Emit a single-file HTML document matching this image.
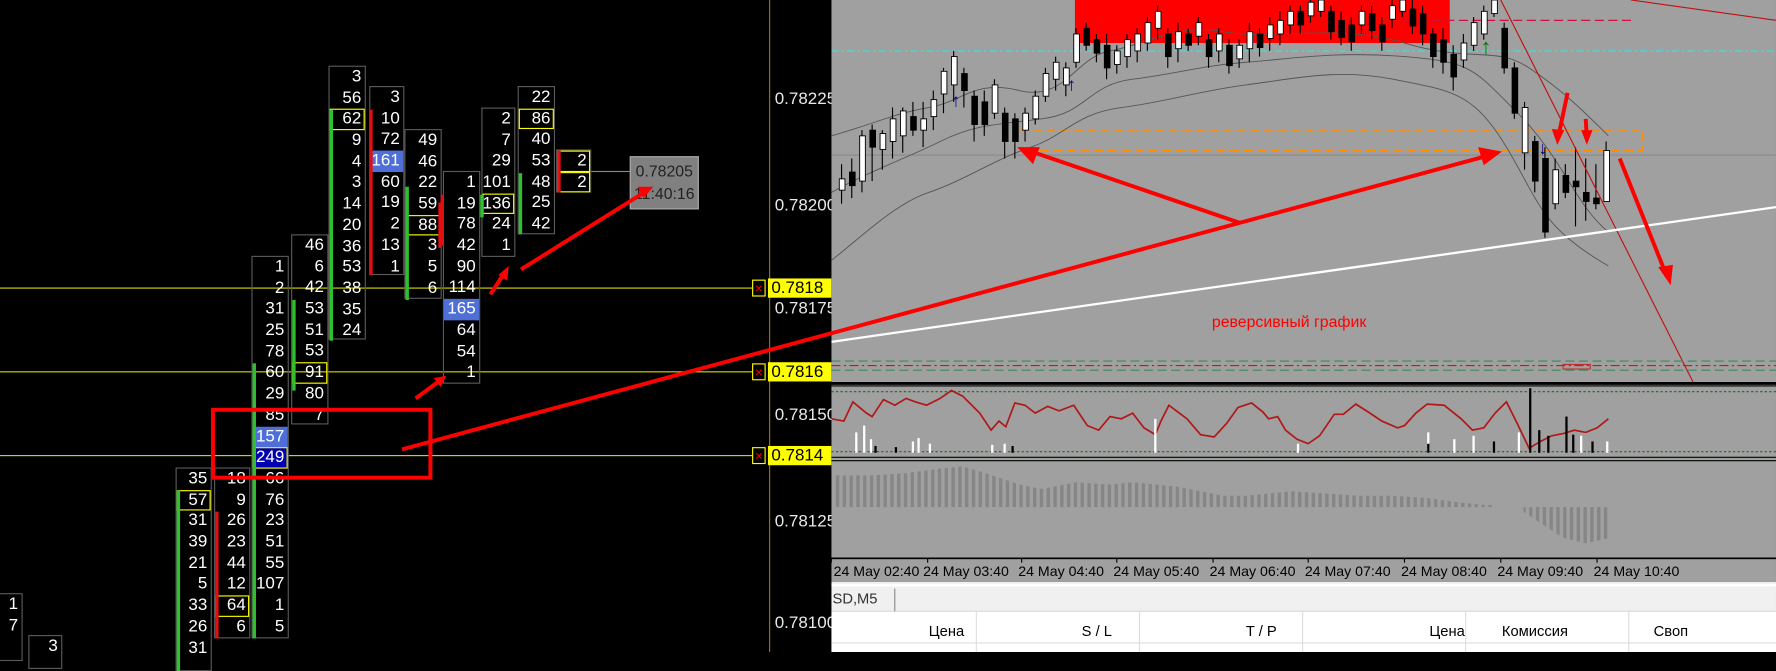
<!DOCTYPE html>
<html><head><meta charset="utf-8">
<style>
html,body{margin:0;padding:0;background:#000;overflow:hidden;width:1776px;height:652px}
#w{position:absolute;left:0;top:0;width:1568px;height:576px;transform:scale(1.13265,1.13194);transform-origin:0 0;background:#000;font-family:"Liberation Sans Narrow","Liberation Sans",sans-serif}
.c{position:absolute;border:1px solid #5a5a5a;box-sizing:border-box}
.c div{height:18.7px;line-height:18.7px;text-align:right;padding-right:3px;color:#fff;font-size:15px;box-sizing:border-box}
.c .y{outline:1px solid #ff0;outline-offset:-1px}
.c .b{background:#4f6fd8}
.c .d{background:#0000b0;outline:1px solid #ff0;outline-offset:-1px}
.bar{position:absolute;width:3px}
.g{background:#2fc02f}.r{background:#e01010}
.ax{position:absolute;left:684px;color:#e8e8e8;font-size:15px;font-family:"Liberation Sans Narrow","Liberation Sans",sans-serif}
.yl{position:absolute;left:678px;width:56px;height:17px;background:#ff0;color:#000;font-size:15px;line-height:17px;padding-left:3px;box-sizing:border-box}
.xb{position:absolute;left:664px;width:12px;height:15px;border:1px solid #ff0;color:#f00;font-size:12px;line-height:14px;text-align:center;box-sizing:border-box}
.tl{position:absolute;top:498px;font-size:12.5px;color:#000}
.th{position:absolute;top:550px;font-size:13px;color:#000}
</style></head><body><div id="w">

<div style="position:absolute;left:0;top:254px;width:664px;height:1px;background:#d8d800"></div>
<div style="position:absolute;left:0;top:328px;width:664px;height:1px;background:#d8d800"></div>
<div style="position:absolute;left:0;top:402px;width:664px;height:1px;background:#d8d800"></div>
<div style="position:absolute;left:679px;top:0;width:1px;height:576px;background:#b06a10"></div>

<div class="c" style="left:-2px;top:524px;width:22px;height:60px"><div>1</div><div>7</div></div>
<div class="c" style="left:25px;top:561px;width:30px;height:30px"><div>3</div></div>

<div class="c" style="left:155px;top:413px;width:32px;height:180px"><div>35</div><div class="y">57</div><div>31</div><div>39</div><div>21</div><div>5</div><div>33</div><div>26</div><div>31</div>
<span class="bar g" style="left:0;top:19px;height:160px"></span></div>
<div class="c" style="left:189px;top:413px;width:32px;height:151px"><div>18</div><div>9</div><div>26</div><div>23</div><div>44</div><div>12</div><div class="y">64</div><div>6</div>
<span class="bar r" style="left:0;top:38px;height:112px"></span></div>
<div class="c" style="left:222px;top:226px;width:33px;height:338px"><div>1</div><div>2</div><div>31</div><div>25</div><div>78</div><div>60</div><div>29</div><div>85</div><div class="b">157</div><div class="d">249</div><div>66</div><div>76</div><div>23</div><div>51</div><div>55</div><div>107</div><div>1</div><div>5</div>
<span class="bar g" style="left:0;top:94px;height:243px"></span></div>
<div class="c" style="left:257px;top:207px;width:33px;height:168px"><div>46</div><div>6</div><div>42</div><div>53</div><div>51</div><div>53</div><div class="y">91</div><div>80</div><div>7</div>
<span class="bar g" style="left:0;top:57px;height:80px"></span></div>
<div class="c" style="left:290px;top:58px;width:33px;height:242px"><div>3</div><div>56</div><div class="y">62</div><div>9</div><div>4</div><div>3</div><div>14</div><div>20</div><div>36</div><div>53</div><div>38</div><div>35</div><div>24</div>
<span class="bar g" style="left:0;top:38px;height:204px"></span></div>
<div class="c" style="left:326px;top:76px;width:31px;height:167px"><div>3</div><div>10</div><div>72</div><div class="b">161</div><div>60</div><div>19</div><div>2</div><div>13</div><div>1</div>
<span class="bar r" style="left:-1px;top:20px;height:146px"></span></div>
<div class="c" style="left:357px;top:114px;width:33px;height:150px"><div>49</div><div>46</div><div>22</div><div>59</div><div class="y">88</div><div>3</div><div>5</div><div>6</div>
<span class="bar g" style="left:0;top:50px;height:100px"></span><span class="bar r" style="left:29px;top:64px;height:40px"></span></div>
<div class="c" style="left:391px;top:151px;width:33px;height:188px"><div>1</div><div>19</div><div>78</div><div>42</div><div>90</div><div>114</div><div class="b">165</div><div>64</div><div>54</div><div>1</div>
<span class="bar r" style="left:-3px;top:20px;height:45px"></span></div>
<div class="c" style="left:425px;top:95px;width:30px;height:132px"><div>2</div><div>7</div><div>29</div><div>101</div><div class="y">136</div><div>24</div><div>1</div>
<span class="bar g" style="left:-2px;top:76px;height:20px"></span></div>
<div class="c" style="left:457px;top:76px;width:33px;height:131px"><div>22</div><div class="y">86</div><div>40</div><div>53</div><div>48</div><div>25</div><div>42</div>
<span class="bar g" style="left:0;top:76px;height:54px"></span></div>
<div class="c" style="left:491px;top:132px;width:31px;height:38px"><div class="y">2</div><div class="y">2</div>
<span class="bar r" style="left:0;top:0;height:37px"></span></div>
<div style="position:absolute;left:522px;top:151px;width:34px;height:1px;background:#888"></div>
<div style="position:absolute;left:556px;top:138px;width:61px;height:47px;background:#808080;border:1px solid #aaa;box-sizing:border-box;color:#222;font-size:14px;line-height:20px;text-align:center;padding-top:2px">0.78205<br>11:40:16</div>

<div class="ax" style="top:79px">0.78225</div>
<div class="ax" style="top:173px">0.78200</div>
<div class="ax" style="top:264px">0.78175</div>
<div class="ax" style="top:358px">0.78150</div>
<div class="ax" style="top:452px">0.78125</div>
<div class="ax" style="top:542px">0.78100</div>
<div class="xb" style="top:247px">×</div><div class="yl" style="top:246px">0.7818</div>
<div class="xb" style="top:321px">×</div><div class="yl" style="top:320px">0.7816</div>
<div class="xb" style="top:395px">×</div><div class="yl" style="top:394px">0.7814</div>

<svg style="position:absolute;left:734px;top:0" width="834" height="576" viewBox="734 0 834 576">
<defs><pattern id="st" width="6" height="10" patternUnits="userSpaceOnUse"><rect x="0" y="0" width="3" height="10" fill="#868686"/></pattern></defs>
<rect x="734" y="0" width="834" height="338" fill="#a0a0a0"/>
<rect x="949" y="0" width="331" height="38" fill="#ff0000"/>
<line x1="734" y1="45" x2="1568" y2="45" stroke="#40e0e0" stroke-dasharray="6,3,2,3"/>
<line x1="734" y1="137" x2="1568" y2="137" stroke="#8a8a8a"/>
<path d="M900 115 H1450 V133 H900" fill="none" stroke="#ff8c00" stroke-dasharray="8,4"/>
<line x1="1240" y1="18" x2="1440" y2="18" stroke="#d01040" stroke-dasharray="8,4"/>
<path d="M734 230 C760 210 790 180 820 170 S880 140 910 130 S950 100 990 95 S1060 80 1100 75 S1180 60 1230 70 S1300 80 1330 130 S1360 200 1420 235" fill="none" stroke="#555" stroke-width="0.8"/>
<path d="M734 120 C770 110 790 100 820 95 S860 70 900 80 S950 50 980 45 S1040 20 1080 28 S1180 20 1240 38 S1320 40 1350 60 S1400 100 1420 120" fill="none" stroke="#555" stroke-width="0.8"/>
<path d="M734 170 C770 150 800 140 830 125 S880 110 920 105 S960 75 1000 70 S1060 58 1100 55 S1180 45 1240 50 S1300 60 1340 100 S1390 180 1420 205" fill="none" stroke="#555" stroke-width="0.8"/>
<g stroke="#000" stroke-width="1">
<path d="M743 145V180M752 140V175M761 115V170M770 110V160M779 115V150M788 95V140M797 95V135M806 90V120M815 90V130M824 80V115M833 60V100M842 45V90M851 60V95M860 80V125M869 80V120M878 70V105M887 95V140M896 100V140M905 95V125M914 80V110M923 60V90M932 50V80M941 55V85M950 25V60M959 20V45M968 30V55M977 30V70M986 40V65M995 30V60M1004 25V55M1013 15V45M1022 5V35M1031 25V60M1040 20V55M1049 25V45M1058 15V40M1067 30V60M1076 25V55M1085 35V65M1094 35V60M1103 20V55M1112 25V50M1121 15V45M1130 10V40M1139 5V30M1148 5V30M1157 0V20M1166 0V15M1175 5V35M1184 10V40M1193 15V45M1202 5V30M1211 5V35M1220 15V45M1229 0V25M1238 0V15M1247 0V30M1256 5V40M1265 25V60M1274 25V65M1283 40V80M1292 30V60M1301 15V45M1310 5V35M1319 0V15M1328 20V65M1337 55V105M1346 90V150M1355 120V170M1364 130V210M1373 140V185M1382 145V175M1391 130V200M1400 140V195M1409 145V185M1418 125V150"/>
</g>
<g stroke="#000" stroke-width="0.8">
<rect x="741" y="158" width="5" height="10" fill="#fff"/><rect x="750" y="152" width="5" height="12" fill="#000"/><rect x="759" y="120" width="5" height="40" fill="#fff"/><rect x="768" y="115" width="5" height="15" fill="#000"/><rect x="777" y="118" width="5" height="14" fill="#fff"/><rect x="786" y="105" width="5" height="20" fill="#fff"/><rect x="795" y="98" width="5" height="22" fill="#fff"/><rect x="804" y="103" width="5" height="12" fill="#000"/><rect x="813" y="105" width="5" height="10" fill="#fff"/><rect x="822" y="88" width="5" height="15" fill="#fff"/><rect x="831" y="63" width="5" height="20" fill="#fff"/><rect x="840" y="50" width="5" height="25" fill="#fff"/><rect x="849" y="65" width="5" height="15" fill="#000"/><rect x="858" y="85" width="5" height="25" fill="#000"/><rect x="867" y="90" width="5" height="20" fill="#000"/><rect x="876" y="75" width="5" height="25" fill="#fff"/><rect x="885" y="100" width="5" height="25" fill="#000"/><rect x="894" y="105" width="5" height="20" fill="#000"/><rect x="903" y="100" width="5" height="15" fill="#fff"/><rect x="912" y="85" width="5" height="20" fill="#fff"/><rect x="921" y="65" width="5" height="20" fill="#fff"/><rect x="930" y="55" width="5" height="15" fill="#fff"/><rect x="939" y="60" width="5" height="15" fill="#fff"/><rect x="948" y="30" width="5" height="25" fill="#fff"/><rect x="957" y="25" width="5" height="15" fill="#000"/><rect x="966" y="35" width="5" height="12" fill="#000"/><rect x="975" y="40" width="5" height="20" fill="#000"/><rect x="984" y="45" width="5" height="12" fill="#fff"/><rect x="993" y="35" width="5" height="15" fill="#fff"/><rect x="1002" y="30" width="5" height="15" fill="#fff"/><rect x="1011" y="20" width="5" height="18" fill="#fff"/><rect x="1020" y="10" width="5" height="15" fill="#fff"/><rect x="1029" y="30" width="5" height="20" fill="#000"/><rect x="1038" y="28" width="5" height="15" fill="#fff"/><rect x="1047" y="30" width="5" height="10" fill="#000"/><rect x="1056" y="20" width="5" height="12" fill="#fff"/><rect x="1065" y="35" width="5" height="15" fill="#000"/><rect x="1074" y="30" width="5" height="15" fill="#fff"/><rect x="1083" y="40" width="5" height="18" fill="#000"/><rect x="1092" y="40" width="5" height="12" fill="#fff"/><rect x="1101" y="28" width="5" height="15" fill="#fff"/><rect x="1110" y="30" width="5" height="12" fill="#000"/><rect x="1119" y="22" width="5" height="12" fill="#fff"/><rect x="1128" y="18" width="5" height="12" fill="#fff"/><rect x="1137" y="10" width="5" height="12" fill="#fff"/><rect x="1146" y="10" width="5" height="12" fill="#000"/><rect x="1155" y="2" width="5" height="12" fill="#fff"/><rect x="1164" y="0" width="5" height="10" fill="#fff"/><rect x="1173" y="10" width="5" height="18" fill="#000"/><rect x="1182" y="18" width="5" height="15" fill="#000"/><rect x="1191" y="22" width="5" height="15" fill="#000"/><rect x="1200" y="10" width="5" height="12" fill="#fff"/><rect x="1209" y="12" width="5" height="15" fill="#000"/><rect x="1218" y="22" width="5" height="15" fill="#000"/><rect x="1227" y="5" width="5" height="12" fill="#fff"/><rect x="1236" y="0" width="5" height="10" fill="#fff"/><rect x="1245" y="8" width="5" height="15" fill="#000"/><rect x="1254" y="12" width="5" height="18" fill="#000"/><rect x="1263" y="30" width="5" height="20" fill="#000"/><rect x="1272" y="35" width="5" height="20" fill="#000"/><rect x="1281" y="48" width="5" height="20" fill="#000"/><rect x="1290" y="38" width="5" height="15" fill="#fff"/><rect x="1299" y="20" width="5" height="20" fill="#fff"/><rect x="1308" y="10" width="5" height="20" fill="#fff"/><rect x="1317" y="0" width="5" height="12" fill="#fff"/><rect x="1326" y="25" width="5" height="35" fill="#000"/><rect x="1335" y="60" width="5" height="40" fill="#000"/><rect x="1344" y="95" width="5" height="40" fill="#fff"/><rect x="1353" y="125" width="5" height="35" fill="#000"/><rect x="1362" y="140" width="5" height="65" fill="#000"/><rect x="1371" y="150" width="5" height="30" fill="#fff"/><rect x="1380" y="155" width="5" height="15" fill="#000"/><rect x="1389" y="160" width="5" height="5" fill="#000"/><rect x="1398" y="170" width="5" height="8" fill="#000"/><rect x="1407" y="175" width="5" height="5" fill="#000"/><rect x="1416" y="133" width="5" height="45" fill="#fff"/>
</g>
<text x="840" y="94" fill="#000080" font-size="16" font-weight="bold">↑</text>
<text x="942" y="80" fill="#000080" font-size="16" font-weight="bold">↑</text>
<text x="1307" y="48" fill="#008000" font-size="20" font-weight="bold">↑</text>
<text x="1358" y="136" fill="#000080" font-size="16" font-weight="bold">↓</text>
<line x1="1325" y1="0" x2="1495" y2="338" stroke="#c01010" stroke-width="1"/>
<line x1="1440" y1="0" x2="1568" y2="18" stroke="#c01010" stroke-width="1"/>
<line x1="734" y1="302" x2="1568" y2="183" stroke="#fff" stroke-width="2"/>
<text x="1070" y="289" fill="#f00" font-size="14" font-family="Liberation Sans, sans-serif">реверсивный график</text>
<line x1="734" y1="319" x2="1568" y2="319" stroke="#3a8a5a" stroke-dasharray="8,4"/>
<line x1="734" y1="323" x2="1568" y2="323" stroke="#f00" stroke-dasharray="8,3,2,3"/>
<line x1="734" y1="327" x2="1568" y2="327" stroke="#3a8a5a" stroke-dasharray="8,4"/>
<rect x="1380" y="322" width="24" height="4" fill="none" stroke="#c03030"/>
<rect x="734" y="340" width="834" height="70" fill="#a0a0a0"/>
<line x1="734" y1="338" x2="1568" y2="338" stroke="#000"/><line x1="734" y1="341" x2="1568" y2="341" stroke="#000"/>
<line x1="734" y1="346" x2="1568" y2="346" stroke="#1a6a1a" stroke-dasharray="2,2"/>
<line x1="734" y1="399" x2="1568" y2="399" stroke="#1a6a1a" stroke-dasharray="2,2"/>
<path d="M734 370 L745 372 L753 355 L765 365 L770 368 L780 353 L790 358 L800 352 L808 355 L818 358 L830 352 L840 345 L850 350 L865 365 L875 380 L882 372 L888 377 L896 356 L905 358 L914 365 L925 359 L935 363 L948 358 L960 376 L970 380 L980 368 L990 370 L1000 365 L1010 378 L1020 384 L1025 372 L1032 358 L1040 364 L1048 370 L1060 384 L1072 386 L1083 374 L1093 360 L1105 356 L1115 364 L1120 370 L1128 368 L1135 380 L1145 388 L1155 392 L1165 385 L1178 366 L1186 366 L1197 357 L1208 364 L1220 372 L1234 378 L1240 376 L1250 365 L1260 357 L1275 358 L1290 370 L1300 380 L1310 378 L1320 365 L1330 355 L1340 375 L1350 396 L1360 390 L1370 385 L1380 383 L1390 380 L1400 382 L1410 378 L1420 370" fill="none" stroke="#b01818" stroke-width="1.5"/>
<g fill="#fff"><rect x="755" y="382" width="2" height="18"/><rect x="762" y="376" width="2" height="24"/><rect x="768" y="388" width="2" height="12"/><rect x="805" y="390" width="2" height="10"/><rect x="810" y="387" width="2" height="13"/><rect x="820" y="392" width="2" height="8"/><rect x="875" y="393" width="2" height="7"/><rect x="886" y="392" width="2" height="8"/><rect x="1019" y="370" width="2" height="30"/><rect x="1145" y="392" width="2" height="8"/><rect x="1260" y="382" width="2" height="18"/><rect x="1283" y="388" width="2" height="12"/><rect x="1300" y="385" width="2" height="15"/><rect x="1340" y="382" width="2" height="18"/><rect x="1395" y="385" width="2" height="15"/><rect x="1418" y="390" width="2" height="10"/></g>
<g fill="#000"><rect x="772" y="394" width="2" height="6"/><rect x="790" y="395" width="2" height="5"/><rect x="893" y="394" width="2" height="6"/><rect x="1260" y="392" width="2" height="8"/><rect x="1318" y="390" width="2" height="10"/><rect x="1350" y="343" width="2" height="57"/><rect x="1358" y="380" width="2" height="20"/><rect x="1366" y="385" width="2" height="15"/><rect x="1382" y="368" width="2" height="32"/><rect x="1388" y="384" width="2" height="16"/><rect x="1405" y="390" width="2" height="10"/></g>
<line x1="734" y1="404" x2="1568" y2="404" stroke="#000"/><line x1="734" y1="407" x2="1568" y2="407" stroke="#000"/>
<rect x="734" y="408" width="834" height="85" fill="#a0a0a0"/>
<polygon points="736,420 770,420 800,418 830,414 850,412 870,418 900,428 920,432 950,426 980,428 1000,426 1040,430 1080,438 1100,438 1140,434 1170,436 1200,438 1230,438 1260,440 1290,444 1310,446 1320,446 1320,448 736,448" fill="url(#st)"/>
<polygon points="1330,448 1345,448 1345,452 1360,462 1380,475 1400,480 1422,475 1422,448" fill="url(#st)"/>
<line x1="734" y1="493" x2="1568" y2="493" stroke="#000"/>
<rect x="734" y="494" width="834" height="20" fill="#a0a0a0"/>
<g stroke="#000"><path d="M734 493v4M819 493v4M902 493v4M986 493v4M1071 493v4M1155 493v4M1240 493v4M1325 493v4M1410 493v4"/></g>
<rect x="734" y="514" width="834" height="62" fill="#f0f0f0"/>
<line x1="734" y1="517" x2="1568" y2="517" stroke="#fff" stroke-width="2"/>
<rect x="734" y="540" width="834" height="36" fill="#fff"/>
<line x1="734" y1="540" x2="1568" y2="540" stroke="#ddd"/>
<line x1="734" y1="568" x2="1568" y2="568" stroke="#ddd"/>
<g stroke="#ddd"><path d="M862 540v36M1006 540v36M1150 540v36M1294 540v36M1438 540v36"/></g>
<line x1="790" y1="520" x2="790" y2="540" stroke="#888"/>
<g stroke="#f00" stroke-width="3.5" fill="none">
<line x1="355" y1="397" x2="1312" y2="138"/>
<line x1="1095" y1="197" x2="905" y2="132"/>
<line x1="1430" y1="140" x2="1472" y2="245"/>
<line x1="1384" y1="82" x2="1376" y2="120"/>
<line x1="1400" y1="105" x2="1401" y2="122"/>
</g>
<g fill="#f00">
<polygon points="1326,134 1305,130 1310,146"/>
<polygon points="898,130 918,130 912,145"/>
<polygon points="1475,252 1464,236 1477,234"/>
<polygon points="1375,128 1370,114 1381,115"/>
<polygon points="1401,128 1396,115 1406,115"/>
</g>
</svg>
<svg style="position:absolute;left:0;top:0" width="734" height="576"><g stroke="#f00" stroke-width="3.5" fill="none"><line x1="355" y1="397" x2="1312" y2="138"/><rect x="188" y="362" width="192" height="60"/><line x1="367" y1="352" x2="390" y2="335"/><line x1="433" y1="260" x2="446" y2="240"/><line x1="460" y1="238" x2="572" y2="168"/></g>
<g fill="#f00"><polygon points="394,332 383,334 389,342"/><polygon points="449,235 440,243 448,248"/><polygon points="577,165 563,165 568,175"/></g></svg>

<div class="tl" style="left:736px">24 May 02:40</div>
<div class="tl" style="left:815px">24 May 03:40</div>
<div class="tl" style="left:899px">24 May 04:40</div>
<div class="tl" style="left:983px">24 May 05:40</div>
<div class="tl" style="left:1068px">24 May 06:40</div>
<div class="tl" style="left:1152px">24 May 07:40</div>
<div class="tl" style="left:1237px">24 May 08:40</div>
<div class="tl" style="left:1322px">24 May 09:40</div>
<div class="tl" style="left:1407px">24 May 10:40</div>
<div style="position:absolute;left:735px;top:521px;font-size:13px;color:#333">SD,M5</div>
<div class="th" style="left:820px">Цена</div>
<div class="th" style="left:955px">S / L</div>
<div class="th" style="left:1100px">T / P</div>
<div class="th" style="left:1262px">Цена</div>
<div class="th" style="left:1326px">Комиссия</div>
<div class="th" style="left:1460px">Своп</div>
</div></body></html>
